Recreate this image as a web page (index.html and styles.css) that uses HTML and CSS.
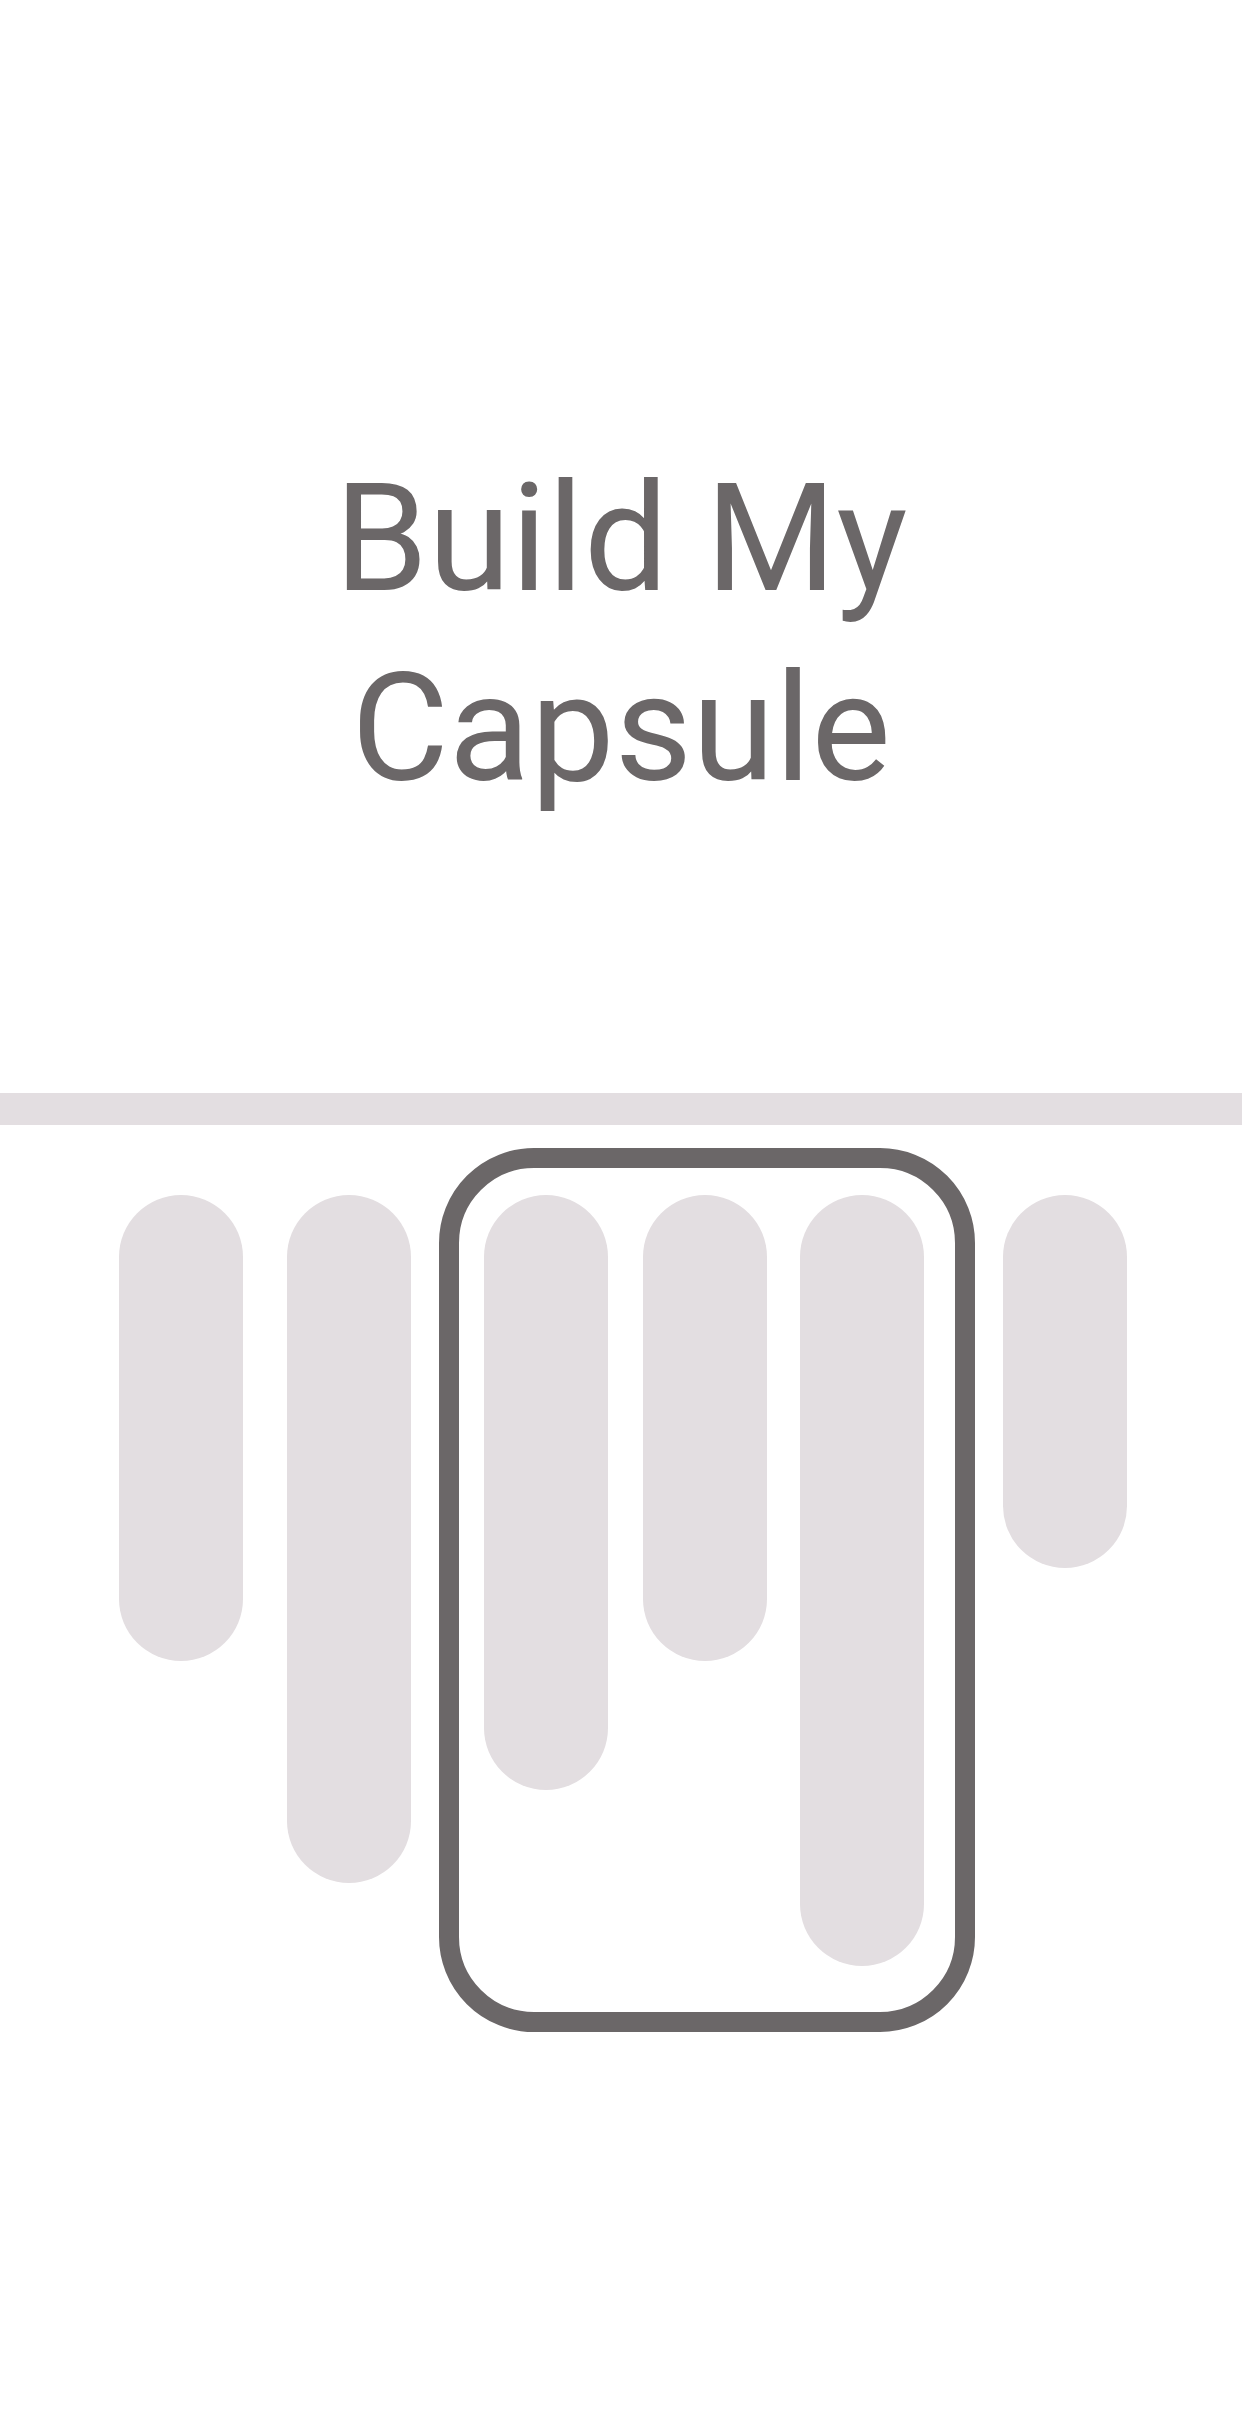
FILE: index.html
```html
<!DOCTYPE html>
<html lang="en">
<head>
<meta charset="utf-8">
<title>Build My Capsule</title>
<link rel="stylesheet" href="styles.css">
</head>
<body>
  <header class="hero">
    <h1 class="title">Build My<br>Capsule</h1>
  </header>
  <div class="rail"></div>
  <section class="stage">
    <div class="pills">
      <div class="pill p1"></div>
      <div class="pill p2"></div>
      <div class="pill p3"></div>
      <div class="pill p4"></div>
      <div class="pill p5"></div>
      <div class="pill p6"></div>
    </div>
    <div class="capsule"></div>
  </section>
</body>
</html>
```

FILE: styles.css
```css
html, body {
  margin: 0;
  padding: 0;
  background: #ffffff;
}

body {
  width: 1242px;
  min-height: 2436px;
  font-family: Roboto, "Liberation Sans", sans-serif;
}

.hero {
  box-sizing: border-box;
  height: 1093px;
  padding-top: 444px;
}

.title {
  margin: 0;
  font-family: Roboto, "Liberation Sans", sans-serif;
  font-weight: 400;
  font-size: 150px;
  line-height: 190px;
  color: #6b6768;
  text-align: center;
}

.rail {
  height: 32px;
  background: #e3dee1;
}

.stage {
  position: relative;
  height: 1311px;
  padding-top: 70px;
  box-sizing: border-box;
}

.pills {
  display: flex;
  align-items: flex-start;
  padding-left: 119px;
}

.pill {
  flex: 0 0 124px;
  width: 124px;
  border-radius: 62px;
  background: #e3dee1;
}

.p1 { height: 466px; }
.p2 { height: 688px; margin-left: 44px; }
.p3 { height: 595px; margin-left: 73px; }
.p4 { height: 466px; margin-left: 35px; }
.p5 { height: 771px; margin-left: 33px; }
.p6 { height: 373px; margin-left: 79px; }

.capsule {
  position: absolute;
  top: 23px;
  left: 439px;
  width: 536px;
  height: 884px;
  box-sizing: border-box;
  border: 20px solid #6b6768;
  border-radius: 95px;
}
```
